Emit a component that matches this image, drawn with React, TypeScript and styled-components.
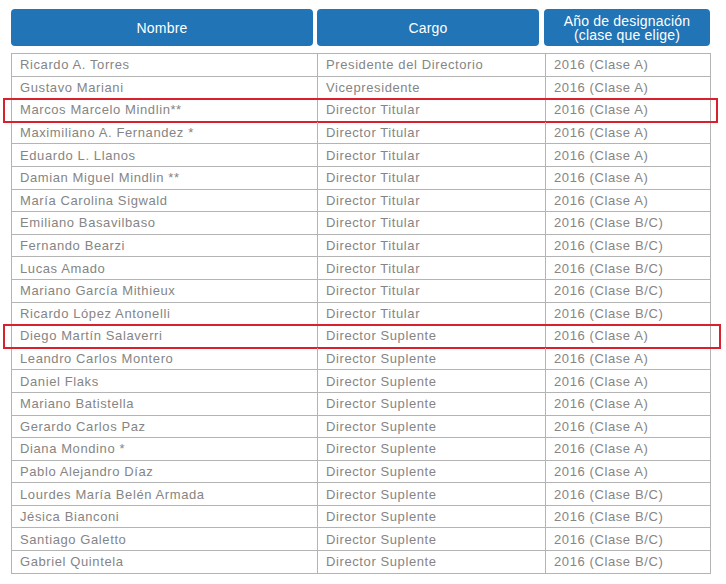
import styled, { createGlobalStyle } from "styled-components";

const GlobalStyle = createGlobalStyle`
  body {
    margin: 0;
    background: #ffffff;
    font-family: "Liberation Sans", Arial, sans-serif;
  }
`;

const Page = styled.div`
  padding: 9px 0 0 11px;
  width: 700px;
`;

const HeaderRow = styled.div`
  display: grid;
  grid-template-columns: 302px 222px 167px;
  column-gap: 4px;
  & > :last-child {
    margin-left: 1px;
  }
`;

const HeaderCell = styled.div`
  background: #2174b5;
  color: #ffffff;
  border-radius: 4px;
  height: 37px;
  display: flex;
  align-items: center;
  justify-content: center;
  text-align: center;
  font-size: 14px;
  line-height: 14px;
  letter-spacing: 0.2px;
`;

const Table = styled.div`
  margin-top: 7px;
  width: 700px;
  border: 1px solid #b4b4b4;
  border-bottom: none;
  box-sizing: border-box;
`;

const Row = styled.div`
  position: relative;
  display: grid;
  grid-template-columns: 305px 228px 1fr;
  height: 22.6px;
  border-bottom: 1px solid #b4b4b4;
  box-sizing: border-box;
`;

const Cell = styled.div`
  display: flex;
  align-items: center;
  padding-left: 8px;
  color: #858585;
  font-size: 13px;
  letter-spacing: 0.6px;
  white-space: nowrap;
  & + & {
    border-left: 1px solid #b4b4b4;
  }
`;

const Highlight = styled.div<{ $right: number }>`
  position: absolute;
  left: -9px;
  right: ${(p) => p.$right}px;
  top: -1px;
  bottom: -2px;
  border: 2px solid #d8212c;
  pointer-events: none;
`;

interface Member {
  name: string;
  role: string;
  year: string;
  mark?: number;
}

const members: Member[] = [
  { name: "Ricardo A. Torres", role: "Presidente del Directorio", year: "2016 (Clase A)" },
  { name: "Gustavo Mariani", role: "Vicepresidente", year: "2016 (Clase A)" },
  { name: "Marcos Marcelo Mindlin**", role: "Director Titular", year: "2016 (Clase A)", mark: -8 },
  { name: "Maximiliano A. Fernandez *", role: "Director Titular", year: "2016 (Clase A)" },
  { name: "Eduardo L. Llanos", role: "Director Titular", year: "2016 (Clase A)" },
  { name: "Damian Miguel Mindlin **", role: "Director Titular", year: "2016 (Clase A)" },
  { name: "María Carolina Sigwald", role: "Director Titular", year: "2016 (Clase A)" },
  { name: "Emiliano Basavilbaso", role: "Director Titular", year: "2016 (Clase B/C)" },
  { name: "Fernando Bearzi", role: "Director Titular", year: "2016 (Clase B/C)" },
  { name: "Lucas Amado", role: "Director Titular", year: "2016 (Clase B/C)" },
  { name: "Mariano García Mithieux", role: "Director Titular", year: "2016 (Clase B/C)" },
  { name: "Ricardo López Antonelli", role: "Director Titular", year: "2016 (Clase B/C)" },
  { name: "Diego Martín Salaverri", role: "Director Suplente", year: "2016 (Clase A)", mark: -11 },
  { name: "Leandro Carlos Montero", role: "Director Suplente", year: "2016 (Clase A)" },
  { name: "Daniel Flaks", role: "Director Suplente", year: "2016 (Clase A)" },
  { name: "Mariano Batistella", role: "Director Suplente", year: "2016 (Clase A)" },
  { name: "Gerardo Carlos Paz", role: "Director Suplente", year: "2016 (Clase A)" },
  { name: "Diana Mondino *", role: "Director Suplente", year: "2016 (Clase A)" },
  { name: "Pablo Alejandro Díaz", role: "Director Suplente", year: "2016 (Clase A)" },
  { name: "Lourdes María Belén Armada", role: "Director Suplente", year: "2016 (Clase B/C)" },
  { name: "Jésica Bianconi", role: "Director Suplente", year: "2016 (Clase B/C)" },
  { name: "Santiago Galetto", role: "Director Suplente", year: "2016 (Clase B/C)" },
  { name: "Gabriel Quintela", role: "Director Suplente", year: "2016 (Clase B/C)" },
];

const App = () => {
  return (
    <Page>
      <GlobalStyle />
      <HeaderRow>
        <HeaderCell>Nombre</HeaderCell>
        <HeaderCell>Cargo</HeaderCell>
        <HeaderCell>
          Año de designación
          <br />
          (clase que elige)
        </HeaderCell>
      </HeaderRow>
      <Table>
        {members.map((m) => (
          <Row key={m.name}>
            <Cell>{m.name}</Cell>
            <Cell>{m.role}</Cell>
            <Cell>{m.year}</Cell>
            {m.mark !== undefined && <Highlight $right={m.mark} />}
          </Row>
        ))}
      </Table>
    </Page>
  );
};

export default App;
